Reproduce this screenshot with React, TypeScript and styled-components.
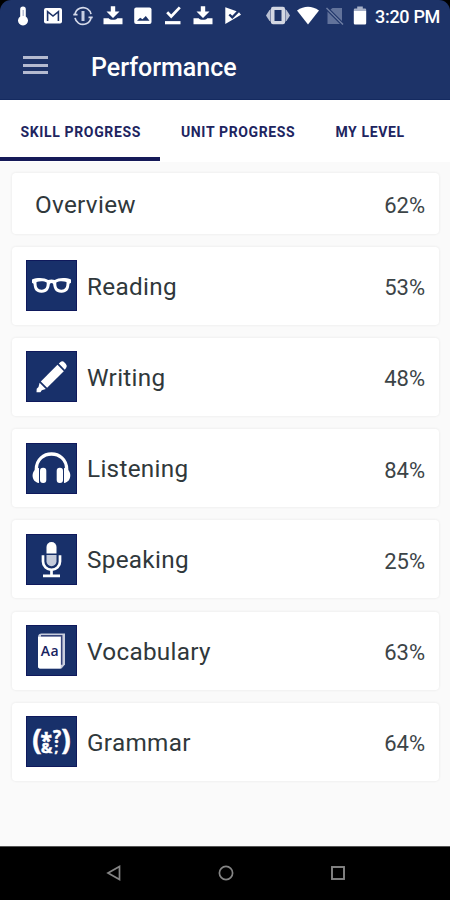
import React from "react";
import styled, { createGlobalStyle } from "styled-components";

const NAVY = "#1d3368";

const GlobalStyle = createGlobalStyle`
  * { box-sizing: border-box; }
  body { margin: 0; background: #000; }
`;

const Screen = styled.div`
  width: 450px;
  height: 900px;
  display: flex;
  flex-direction: column;
  overflow: hidden;
  background: #fafafa;
  font-family: Roboto, "Liberation Sans", sans-serif;
`;

const HeaderBackdrop = styled.div`
  background: #000;
`;

const Header = styled.header`
  height: 100px;
  background: ${NAVY};
  border-bottom: 1px solid #142a60;
  border-radius: 11px 11px 0 0;
`;

const StatusBar = styled.div`
  height: 32px;
  display: flex;
  align-items: center;
  padding-left: 8px;
  color: #fff;
`;

const StatusSlot = styled.span<{ $width: number }>`
  width: ${(p) => p.$width}px;
  flex: none;
  display: flex;
  justify-content: center;
`;

const StatusGap = styled.span`
  width: 15px;
  flex: none;
`;

const Clock = styled.span`
  margin-left: 2px;
  padding-top: 1px;
  font-size: 18px;
  font-weight: 500;
  line-height: 32px;
  letter-spacing: -0.3px;
  white-space: nowrap;
`;

const Toolbar = styled.div`
  height: 67px;
  display: flex;
  align-items: center;
  padding: 0 0 1px 23px;
`;

const MenuButton = styled.button`
  width: 25px;
  height: 18px;
  padding: 0;
  border: 0;
  background: none;
  display: flex;
  flex-direction: column;
  justify-content: space-between;
`;

const MenuLine = styled.span`
  width: 25px;
  height: 3px;
  background: #b4bad0;
`;

const Title = styled.h1`
  margin: 5px 0 0 43px;
  color: #fff;
  font-size: 25px;
  font-weight: 500;
  line-height: 32px;
`;

const Tabs = styled.nav`
  height: 62px;
  display: flex;
  background: #fff;
`;

const Tab = styled.button<{ $active?: boolean }>`
  height: 61px;
  padding: 6px 19.5px 0 20.5px;
  border: 0;
  border-bottom: 4px solid ${(p) => (p.$active ? "#151a58" : "transparent")};
  background: none;
  color: #20245f;
  font-family: inherit;
  font-size: 14px;
  font-weight: 700;
  letter-spacing: 0.64px;
  white-space: nowrap;
`;

const List = styled.main`
  flex: 1;
  display: flex;
  flex-direction: column;
  gap: 13.3px;
  padding: 11px 11px 0 12px;
`;

const Card = styled.section<{ $compact?: boolean }>`
  height: ${(p) => (p.$compact ? 61 : 78)}px;
  margin-bottom: ${(p) => (p.$compact ? -0.8 : 0)}px;
  flex: none;
  display: flex;
  align-items: center;
  padding: 0 14px 0 ${(p) => (p.$compact ? 23 : 13)}px;
  border-radius: 4px;
  background: #fff;
  box-shadow: 0 0 2px 1px #f0f0f0;
`;

const IconTile = styled.span`
  width: 51px;
  height: 51px;
  flex: none;
  margin: 0 10.5px 0 0.5px;
  background: #18306a;
  border: 1px solid #0f195c;
  display: flex;
  align-items: center;
  justify-content: center;
`;

const Label = styled.span`
  flex: 1;
  margin-top: 2px;
  color: #30383b;
  font-size: 24.3px;
  letter-spacing: 0.3px;
  line-height: 30px;
`;

const Percent = styled.span`
  margin-top: 5px;
  color: #3c4447;
  font-size: 22px;
  line-height: 28px;
`;

const NavBar = styled.footer`
  height: 54px;
  display: flex;
  align-items: center;
  justify-content: center;
  gap: 96px;
  padding: 0 0 1px 1px;
  background: #000;
  border-top: 1px solid #555;
`;

const Svg = ({ w, h, children }: { w: number; h: number; children: React.ReactNode }) => (
  <svg width={w} height={h} viewBox={`0 0 ${w} ${h}`} fill="none" aria-hidden="true">
    {children}
  </svg>
);

const Thermometer = () => (
  <Svg w={20} h={20}>
    <path d="M7.2 3.2a2.8 2.8 0 0 1 5.6 0v7.2a5 5 0 1 1-5.6 0z" fill="#fff" />
    <path d="M10.2 4v6" stroke="#a9b2cb" strokeWidth="1.3" />
  </Svg>
);
const Mail = () => (
  <Svg w={20} h={20}>
    <rect x="1" y="2" width="18" height="15.5" rx="2" fill="#fff" />
    <path d="M4.6 15V5.6L10 10l5.4-4.4V15" stroke={NAVY} strokeWidth="1.6" />
  </Svg>
);
const SyncAlert = () => (
  <Svg w={20} h={20}>
    <path d="M2 8.2A8.2 8.2 0 0 1 14.5 2.9M18 8.2A8.2 8.2 0 0 0 14.5 2.9M2 11.8A8.2 8.2 0 0 0 5.5 17.1M18 11.8A8.2 8.2 0 0 1 5.5 17.1" stroke="#d5daea" strokeWidth="1.7" />
    <path d="M.3 8.6h4.2M15.500 11.400h4.200" stroke="#d5daea" strokeWidth="1.7" />
    <path d="M10 5v10" stroke="#c7cee2" strokeWidth="3" />
  </Svg>
);
const Download = () => (
  <Svg w={20} h={20}>
    <path d="M7.8.3h4.4v5.3h4.3L10 12 3.5 5.6h4.3z" fill="#fff" />
    <path d="M.5 12.2h5.2c1.3 2.2 7.3 2.2 8.6 0h5.2v6H.5z" fill="#fff" />
  </Svg>
);
const Picture = () => (
  <Svg w={20} h={20}>
    <rect x="1.2" y="1.5" width="17.3" height="16.5" rx="2" fill="#fff" />
    <path d="m4 14.8 3.2-3 2.3 1.5 3.3-3.3 3.7 4.8z" fill={NAVY} />
  </Svg>
);
const CheckLine = () => (
  <Svg w={20} h={20}>
    <path d="m4.2 6.3 4 4.1 8.6-9" stroke="#fff" strokeWidth="2.8" />
    <path d="M2 16.7h15.5" stroke="#fff" strokeWidth="3.2" />
  </Svg>
);
const PlayCheck = () => (
  <Svg w={20} h={20}>
    <path d="M2.3 1.3 13.600 5.300l-4.300 4.500-2.200-2.100-1.600 1.600 3.800 3.700 6.700-6.800 2 2.600L2.300 18z" fill="#fff" />
  </Svg>
);
const Vibrate = () => (
  <Svg w={24} h={20}>
    <path d="M0 9.5 3.5 4h17L24 9.5 20.5 15h-17z" fill="#b9c0d2" />
    <rect x="5" y=".7" width="14" height="17.6" rx="2" fill="#d3d7e2" />
    <rect x="8.5" y="4" width="7" height="11" fill={NAVY} />
    <path d="M4.5 3v13M19.5 3v13" stroke="#6e7b9e" strokeWidth=".8" />
  </Svg>
);
const Wifi = () => (
  <Svg w={24} h={20}>
    <path d="M1 4.5Q12-3 23 4.500L12 18.500z" fill="#fff" />
  </Svg>
);
const NoSim = () => (
  <Svg w={20} h={20}>
    <path d="M7.5 2H17v13L5.5 3.5zM2.5 5.5 15 18H2.5z" fill="#62739b" />
    <path d="m1.5 2 16.5 16.5" stroke="#6f7fa4" strokeWidth="1.5" />
  </Svg>
);
const Battery = () => (
  <Svg w={14} h={20}>
    <path d="M4.2.5h5.6v2H12a1.3 1.3 0 0 1 1.2 1.3V5H.8V3.8A1.3 1.3 0 0 1 2 2.5h2.2z" fill="#a8b1c7" />
    <path d="M.8 5h12.4v12.2A1.3 1.3 0 0 1 12 18.5H2a1.3 1.3 0 0 1-1.2-1.3z" fill="#fff" />
  </Svg>
);

const Glasses = () => (
  <Svg w={49} h={49}>
    <path
      fillRule="evenodd"
      fill="#fff"
      d="M5 18.4c5.5-2 13-1.7 16.2.7q3.3-1.3 6.6 0c3.2-2.4 10.7-2.7 16.2-.7v3.4l-1.5 1c-.5 6-2.500 8.700-7.700 8.900-6.200.3-8.200-3.700-8.700-9q-1.600-1.400-3.200 0c-.5 5.300-2.500 9.300-8.700 9-5.200-.2-7.200-2.900-7.700-8.900l-1.500-1zM9.500 21c-.2 5.200 1.200 7.600 5 7.700 4.200.1 5.400-2.700 5.200-7.100-2.500-1.900-7-1.800-10.200-.6zM29.300 21.600c-.2 4.400 1 7.200 5.200 7.100 3.800-.1 5.200-2.500 5-7.700-3.200-1.200-7.700-1.300-10.200.6z"
    />
  </Svg>
);
const Pencil = () => (
  <Svg w={49} h={49}>
    <path d="m30.5 12.8 6.3 6.4-16.7 16.5-6.3-6.3z" fill="#fff" />
    <path d="m31.8 11.5 1.7-1.5q2-1.5 4 .5l1.4 1.5q1.7 2 .3 3.7L37.800 17.700z" fill="#fff" />
    <path d="m12.6 30.8 6.2 6.2-4 1.3-1.4 1.9H9.5l.2-3.5 1.800-1.700z" fill="#fff" />
  </Svg>
);
const Headphones = () => (
  <Svg w={49} h={49}>
    <path d="M9.3 29v-3.500C9.300 4.800 39.700 4.800 39.700 25.500V29" stroke="#fff" strokeWidth="3.3" />
    <path d="M12 24v15C3.500 38 3.500 25 12 24zM37 24v15c8.500-1 8.500-14 0-15z" fill="#fff" />
    <rect x="13" y="23.700" width="6.300" height="15.300" rx="3" fill="#fff" />
    <rect x="29.700" y="23.700" width="6.300" height="15.300" rx="3" fill="#fff" />
  </Svg>
);
const Microphone = () => (
  <Svg w={49} h={49}>
    <path d="M19.5 18.5V12a5 5 0 0 1 10 0v6.5z" fill="#fff" />
    <path d="M19.5 20h10v6.3a5 5 0 0 1-10 0z" fill="#c4cadb" />
    <path d="M16 20.2v6.2a8.500 8.500 0 0 0 17 0v-6.200M24.500 34.500v5.800M16 40.800h17" stroke="#fff" strokeWidth="2.7" />
  </Svg>
);
const Dictionary = () => (
  <Svg w={49} h={49}>
    <path d="M11 10.500Q11.500 7.400 14.500 7.400H38v31L34.500 42.500H14q-3 0-3-2.600z" fill="#c8cddd" />
    <path d="M11 11h22.700v31.500H14q-3 0-3-2.600z" fill="#fff" />
    <path d="M14 9.800h20.700v29" stroke="#36447c" strokeWidth="1.5" />
    <text x="23" y="29.800" textAnchor="middle" fontFamily="Open Sans" fontSize="14" fontWeight="600" letterSpacing=".6" fill="#18235f">Aa</text>
  </Svg>
);
const Symbols = () => (
  <Svg w={49} h={49}>
    <g fill="#fff" stroke="#fff" strokeWidth=".5" fontFamily="Open Sans" fontWeight="700" textAnchor="middle">
      <text x="10" y="33" fontSize="28">(</text>
      <text x="39" y="33" fontSize="28">)</text>
      <text x="19.3" y="30.500" fontSize="21">*</text>
      <text x="30" y="25.500" fontSize="17">?</text>
      <text x="19.5" y="36" fontSize="15">&amp;</text>
      <text x="29.300" y="35" fontSize="13">;</text>
    </g>
  </Svg>
);

const notifications = [Thermometer, Mail, SyncAlert, Download, Picture, CheckLine, Download, PlayCheck];

const skills = [
  { name: "Reading", score: 53, Icon: Glasses },
  { name: "Writing", score: 48, Icon: Pencil },
  { name: "Listening", score: 84, Icon: Headphones },
  { name: "Speaking", score: 25, Icon: Microphone },
  { name: "Vocabulary", score: 63, Icon: Dictionary },
  { name: "Grammar", score: 64, Icon: Symbols },
];

export default function App() {
  return (
    <>
      <GlobalStyle />
      <Screen>
        <HeaderBackdrop>
          <Header>
            <StatusBar>
              {notifications.map((Icon, i) => (
                <StatusSlot key={i} $width={30}>
                  <Icon />
                </StatusSlot>
              ))}
              <StatusGap />
              <StatusSlot $width={29}><Vibrate /></StatusSlot>
              <StatusSlot $width={31}><Wifi /></StatusSlot>
              <StatusSlot $width={24}><NoSim /></StatusSlot>
              <StatusSlot $width={26}><Battery /></StatusSlot>
              <Clock>3:20 PM</Clock>
            </StatusBar>
            <Toolbar>
              <MenuButton aria-label="Menu">
                <MenuLine />
                <MenuLine />
                <MenuLine />
              </MenuButton>
              <Title>Performance</Title>
            </Toolbar>
          </Header>
        </HeaderBackdrop>
        <Tabs>
          <Tab $active>SKILL PROGRESS</Tab>
          <Tab>UNIT PROGRESS</Tab>
          <Tab>MY LEVEL</Tab>
        </Tabs>
        <List>
          <Card $compact>
            <Label>Overview</Label>
            <Percent>62%</Percent>
          </Card>
          {skills.map(({ name, score, Icon }) => (
            <Card key={name}>
              <IconTile>
                <Icon />
              </IconTile>
              <Label>{name}</Label>
              <Percent>{score}%</Percent>
            </Card>
          ))}
        </List>
        <NavBar>
          <Svg w={16} h={16}>
            <path d="M2 8 13.5 1.5v13z" stroke="#858585" strokeWidth="1.7" />
          </Svg>
          <Svg w={16} h={16}>
            <circle cx="8" cy="8" r="6.6" stroke="#858585" strokeWidth="1.7" />
          </Svg>
          <Svg w={16} h={16}>
            <rect x="2" y="2" width="12" height="12" stroke="#858585" strokeWidth="1.9" />
          </Svg>
        </NavBar>
      </Screen>
    </>
  );
}
